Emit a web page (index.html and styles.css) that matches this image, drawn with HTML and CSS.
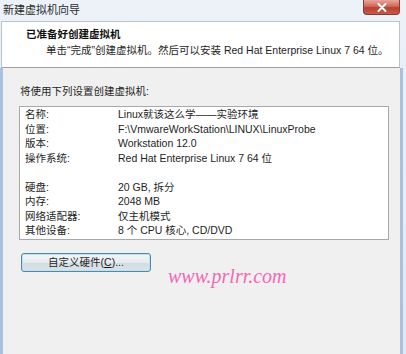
FILE: index.html
```html
<!DOCTYPE html>
<html lang="zh-CN">
<head>
<meta charset="utf-8">
<title>新建虚拟机向导</title>
<link rel="stylesheet" href="styles.css">
</head>
<body>
<div class="window">
  <div class="titlebar">
    <div class="title-text">新建虚拟机向导</div>
    <div class="close">
      <svg width="10" height="9" viewBox="0 0 10 9"><path d="M1.5 1 L8.5 8 M8.5 1 L1.5 8" stroke="#fff" stroke-width="2" stroke-linecap="round"/></svg>
    </div>
  </div>
  <div class="header">
    <div class="h-title">已准备好创建虚拟机</div>
    <div class="h-sub">单击“完成”创建虚拟机。然后可以安装 Red Hat Enterprise Linux 7 64 位。</div>
  </div>
  <div class="client">
    <div class="intro">将使用下列设置创建虚拟机:</div>
    <div class="listbox">
      <div class="k">名称:</div><div class="v">Linux就该这么学——实验环境</div>
      <div class="k">位置:</div><div class="v">F:\VmwareWorkStation\LINUX\LinuxProbe</div>
      <div class="k">版本:</div><div class="v">Workstation 12.0</div>
      <div class="k">操作系统:</div><div class="v">Red Hat Enterprise Linux 7 64 位</div>
      <div class="k blank"></div><div class="v blank"></div>
      <div class="k">硬盘:</div><div class="v">20 GB, 拆分</div>
      <div class="k">内存:</div><div class="v">2048 MB</div>
      <div class="k">网络适配器:</div><div class="v">仅主机模式</div>
      <div class="k">其他设备:</div><div class="v">8 个 CPU 核心, CD/DVD</div>
    </div>
    <button class="btn">自定义硬件(<span class="u">C</span>)...</button>
  </div>
  <div class="watermark">www.prlrr.com</div>
</div>
</body>
</html>
```

FILE: styles.css
```css
html, body {
  margin: 0;
  padding: 0;
}
body {
  font-family: "Liberation Sans", "Noto Sans CJK SC", sans-serif;
  font-size: 10.5px;
  color: #1e1e1e;
  background: #f0f0f0;
}
.window {
  position: relative;
  width: 406px;
  height: 354px;
  display: flex;
  flex-direction: column;
  background: linear-gradient(#edf2f9, #dfe8f3);
  overflow: hidden;
}
.titlebar {
  height: 21px;
  display: flex;
  align-items: flex-start;
  flex: none;
}
.title-text {
  padding: 3px 0 0 3px;
  font-size: 11px;
  line-height: 14px;
  color: #2a2a2a;
}
.close {
  margin-left: auto;
  margin-right: 6px;
  width: 37px;
  height: 15px;
  box-sizing: border-box;
  border: 1px solid #8a3a30;
  border-top: none;
  border-radius: 0 0 4px 4px;
  background: linear-gradient(#e9a79a, #d0685a 45%, #b9402f 55%, #c85a48);
  display: flex;
  align-items: center;
  justify-content: center;
}
.close svg {
  display: block;
}
.header {
  flex: none;
  margin: 0 6px 0 1px;
  height: 47px;
  box-sizing: border-box;
  background: #ffffff;
  border: 1px solid #b9c3cd;
  border-bottom: 1px solid #a0a0a0;
  padding: 5px 0 0 24px;
}
.h-title {
  font-weight: bold;
  line-height: 14px;
  color: #111;
}
.h-sub {
  margin-top: 2px;
  padding-left: 20px;
  line-height: 14px;
}
.client {
  flex: 1;
  margin-right: 3px;
  border-left: 3px solid #a9c1dd;
  border-right: 3px solid #a9c1dd;
  background: #f0f0f0;
  padding: 16px 0 0 16px;
  display: flex;
  flex-direction: column;
  align-items: flex-start;
}
.intro {
  line-height: 14px;
  padding-left: 1px;
}
.listbox {
  margin-top: 8px;
  width: 370px;
  box-sizing: border-box;
  background: #ffffff;
  border: 1px solid #a9a9a9;
  padding: 0 0 1px 5px;
  display: grid;
  grid-template-columns: 93px 1fr;
}
.listbox .k,
.listbox .v {
  line-height: 14.5px;
  height: 14.5px;
  white-space: nowrap;
}
.btn {
  margin: 13px 0 0 2px;
  width: 130px;
  height: 19px;
  padding: 0;
  font-family: inherit;
  font-size: 10.5px;
  color: #1e1e1e;
  border: 1px solid #4f8ba6;
  border-radius: 3px;
  background: linear-gradient(#f4f6f8, #e6ebef 50%, #d3dce3 51%, #dbe3e9);
  box-shadow: inset 0 0 0 1px #bfe0ee;
  line-height: 15px;
}
.u {
  text-decoration: underline;
}
.watermark {
  position: absolute;
  left: 168px;
  top: 266px;
  font-family: "Liberation Serif", serif;
  font-style: italic;
  font-size: 20px;
  line-height: 20px;
  color: #f268b8;
}
```
